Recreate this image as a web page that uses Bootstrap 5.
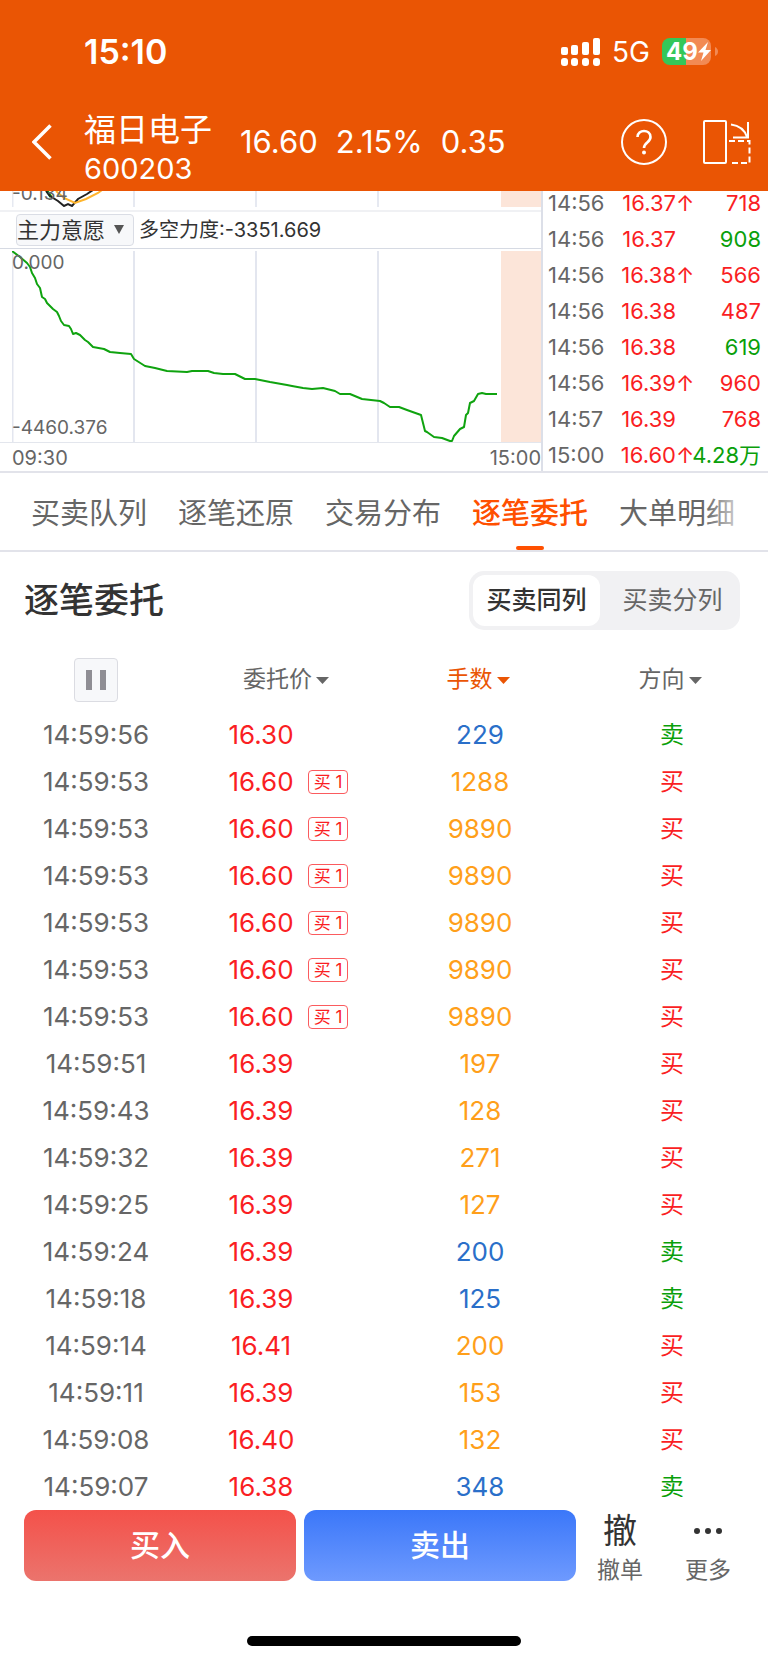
<!DOCTYPE html>
<html lang="zh-CN">
<head>
<meta charset="utf-8">
<meta name="viewport" content="width=device-width, initial-scale=1">
<title>福日电子 600203</title>
<link href="https://cdn.jsdelivr.net/npm/bootstrap@5.3.0/dist/css/bootstrap.min.css" rel="stylesheet">
<style>
  :root { --brand: #ea5504; --accent: #ff5000; --rise: #fa1e23; --fall: #0aa00a; --ink: #333; --dim: #666; --rule: #e2e3ea; }
  body { font-family: Inter, "Noto Sans CJK SC", sans-serif; color: var(--dim); background: #fff; height: 100vh; overflow: hidden; }
  svg { display: block; flex: none; }
  a { color: inherit; text-decoration: none; }
  .rise { color: var(--rise); }
  .fall { color: var(--fall); }
  .big { color: #ff9f1a; }
  .mid { color: #2a6fc9; }

  .app-head { background: var(--brand); color: #fff; }
  .status-row { height: 103px; padding: 0 50px 0 84px; }
  .clock { font-size: 34px; font-weight: 600; }
  .carrier { font-size: 28px; margin: 0 12px; }
  .battery { width: 49px; height: 27px; border-radius: 8px; background: linear-gradient(90deg, #34c759 50%, #f28a54 50%); padding-left: 4px; font-size: 24px; font-weight: 700; line-height: 27px; }
  .quote-row { height: 88px; padding: 0 17px 10px 32px; }
  .stock { margin-top: 14px; line-height: 39px; }
  .stock-name { font-size: 32px; }
  .stock-code { font-size: 29px; }
  .quote { font-size: 31px; gap: 18px; margin-left: 28px; }

  .market { border-bottom: 2px solid var(--rule); }
  .plot-side { min-width: 0; padding-left: 12px; border-right: 2px solid #dcdfe8; }
  .plot { position: relative; }
  .plot svg { width: 100%; height: 100%; }
  .plot-top { height: 16px; overflow: hidden; }
  .plot-main { height: 191px; }
  .plot-label { position: absolute; left: 0; font-size: 19px; line-height: 24px; }
  .indicator-row { margin: 3px 0 2px -12px; padding-left: 16px; height: 39px; border-top: 2px solid #f0f1f4; border-bottom: 1px solid #d6dae3; color: var(--ink); font-size: 20px; }
  .picker { position: relative; margin-right: 5px; }
  .picker select { appearance: none; width: 118px; height: 32px; padding: 0; border: 1px solid #dadde5; border-radius: 4px; background: #f7f8fa; color: var(--ink); font-size: 22px; line-height: 30px; }
  .picker svg { position: absolute; right: 10px; top: 11px; pointer-events: none; }
  .time-axis { margin-left: -12px; padding-left: 12px; height: 29px; border-top: 1px solid #e3e6ed; font-size: 20px; line-height: 30px; }
  .ticks-side { width: 225px; height: 280px; overflow: hidden; padding: 0 7px 0 5px; }
  .ticks { width: 100%; margin-top: -6px; table-layout: fixed; font-size: 22px; line-height: 36px; white-space: nowrap; }
  .ticks td { padding: 0; }

  .tab-row { height: 79px; border-bottom: 2px solid var(--rule); padding-left: 31px; gap: 31px; font-size: 29px; white-space: nowrap; overflow: hidden; position: relative; }
  .tab-row::after { content: ""; position: absolute; right: 0; top: 0; width: 64px; height: 76px; background: linear-gradient(90deg, #fff0, #fff 76%); }
  .tab-row a { position: relative; padding-top: 5px; line-height: 72px; }
  .tab-row a.active { color: var(--accent); font-weight: 500; }
  .tab-row a.active::after { content: ""; position: absolute; left: 50%; bottom: 0; width: 28px; margin-left: -14px; height: 4px; border-radius: 2px; background: var(--accent); }
  .title-row { padding: 19px 28px 18px 24px; }
  .title-row h1 { font-size: 35px; line-height: 59px; font-weight: 500; color: var(--ink); }
  .switch { padding: 4px; gap: 9px; border-radius: 15px; background: #f1f1f3; }
  .switch button { width: 127px; height: 51px; padding: 0; border: 0; border-radius: 12px; background: none; color: var(--dim); font-size: 25px; }
  .switch .active { background: #fff; color: var(--ink); font-weight: 500; }

  .orders { width: 100%; table-layout: fixed; text-align: center; font-size: 26px; line-height: 47px; }
  .orders td, .orders th { padding: 0; }
  .orders th { height: 63px; font-size: 23px; font-weight: 400; vertical-align: middle; }
  .sorter { padding: 0 4px 0 0; border: 0; background: none; color: inherit; line-height: 30px; }
  .orders td:last-child { font-size: 24px; }
  .pause { display: block; width: 44px; height: 44px; margin: 0 auto; padding: 0; border: 1px solid #dbdce2; border-radius: 4px; background: #f7f8fa; }
  .price { width: 66px; }
  .level { width: 40px; height: 24px; margin-left: 14px; }
  .level-on { border: 1px solid #fb5b5e; border-radius: 4px; font-size: 17px; line-height: 22px; }
  .sorted { color: var(--brand); }

  .foot { padding: 13px 16px 17px 24px; }
  .trade { height: 71px; border: 0; border-radius: 12px; color: #fff; font-size: 30px; font-weight: 500; flex: 1 1 0; }
  .trade:hover { color: #fff; }
  .buy { background: linear-gradient(#f4514a, #eb746d); margin-right: 8px; }
  .sell { background: linear-gradient(#3b77f9, #6e9afe); }
  .tool { width: 88px; height: 71px; padding: 0; border: 0; background: none; color: var(--dim); font-size: 23px; line-height: 24px; }
  .tool-mark { height: 48px; font-size: 34px; line-height: 42px; color: var(--ink); }
  .home-bar { width: 274px; height: 10px; border-radius: 5px; background: #000; margin: 55px 0 0 -8px; }
</style>
</head>
<body class="d-flex flex-column">

<header class="app-head flex-shrink-0">
  <div class="status-row d-flex align-items-center">
    <span class="clock me-auto">15:10</span>
    <svg width="39" height="28" viewBox="0 0 39 28" fill="#fff" aria-hidden="true">
      <rect x="0" y="9" width="7" height="8" rx="2"/><rect x="10" y="7" width="7" height="10" rx="2"/><rect x="21" y="4" width="7" height="13" rx="2"/><rect x="32" y="0" width="7" height="17" rx="2"/>
      <rect x="0" y="20" width="7" height="8" rx="3"/><rect x="10" y="20" width="7" height="8" rx="3"/><rect x="21" y="20" width="7" height="8" rx="3"/><rect x="32" y="20" width="7" height="8" rx="3"/>
    </svg>
    <span class="carrier">5G</span>
    <span class="battery d-flex align-items-center">49<svg width="13" height="19" viewBox="0 0 13 19" fill="#fff" aria-hidden="true"><path d="M10 0 0 10.500h5.500L3 19 13 8H7.500z"/></svg></span>
    <svg class="ms-1" width="3" height="9" viewBox="0 0 3 9" aria-hidden="true"><path d="M0 0q3 1.500 3 4.500T0 9z" fill="#f28a54"/></svg>
  </div>
  <div class="quote-row d-flex align-items-center">
    <a href="#" aria-label="返回"><svg width="20" height="36" viewBox="0 0 20 36" fill="none" stroke="#fff" stroke-width="3.500"><path d="M18.500 1.500 2 18l16.500 16.500"/></svg></a>
    <div class="stock ms-4 ps-2">
      <div class="stock-name">福日电子</div>
      <div class="stock-code">600203</div>
    </div>
    <div class="quote d-flex me-auto"><span>16.60</span><span>2.15%</span><span>0.35</span></div>
    <a href="#" aria-label="帮助"><svg width="46" height="46" viewBox="0 0 46 46" fill="none" stroke="#fff" stroke-width="2"><circle cx="23" cy="23" r="22"/><path stroke-width="2.600" d="M16.500 18c0-8 13-8 13 0 0 5.500-6.500 5.500-6.500 11"/><circle cx="23" cy="33.500" r="2" fill="#fff" stroke="none"/></svg></a>
    <a href="#" class="ms-4 ps-2" aria-label="横屏"><svg class="ms-1" width="48" height="44" viewBox="0 0 48 44" fill="none" stroke="#fff" stroke-width="2"><rect x="1" y="1" width="22" height="42" rx="1"/><path d="M28 4.500c8 1 13.500 5 16 12.500M45 2v15.500H30"/><path stroke-dasharray="6 3" d="M26 21h20.500v22H26"/></svg></a>
  </div>
</header>

<main class="flex-grow-1 overflow-hidden">
  <section class="market d-flex">
    <div class="plot-side flex-grow-1">
      <div class="plot plot-top">
        <svg viewBox="0 0 529 16" preserveAspectRatio="none" fill="none" stroke-width="2" aria-hidden="true">
          <rect x="489" width="40" height="16" fill="#fce5d9"/>
          <path stroke="#e6e9f1" d="M.5 0v16M122 0v16M244 0v16M366 0v16"/>
          <path stroke="#0aa00a" stroke-width="3" d="M35 0l4 6"/>
          <path stroke="#222" d="M34 0l4 5 8 5 6 5 4-2 4 2 6-7 9-5 6-4"/>
          <path stroke="#ffb52e" d="M44 0l8 7 11 5 11-4 12-6 4-3"/>
        </svg>
        <span class="plot-label" style="top:-9px">-0.134</span>
      </div>
      <div class="indicator-row d-flex align-items-center">
        <div class="picker">
          <select aria-label="指标"><option>主力意愿</option></select>
          <svg width="10" height="9" viewBox="0 0 10 9" aria-hidden="true"><path d="M0 0h10L5 9z" fill="#555"/></svg>
        </div>
        <span>多空力度:-3351.669</span>
      </div>
      <div class="plot plot-main">
        <svg viewBox="0 0 529 191" preserveAspectRatio="none" fill="none" stroke-width="2" aria-hidden="true">
          <rect x="489" width="40" height="191" fill="#fce5d9"/>
          <path stroke="#e3e6ef" d="M.5 0v191M122 0v191M244 0v191M366 0v191"/>
          <path stroke="#0fa30f" stroke-linejoin="round" d="M0 0L8 6 15 12 18 16 20 22 23 27 25 33 28 37 30 46 33 48 35 52 41 58 45 61 47 65 49 70 52 74 57 75 59 78 61 83 64 82 68 84 73 89 76 91 81 96 92 98 98 101 108 102 119 103 122 108 133 115 143 117 155 120 175 121 180 120 196 120 202 122 211 123 223 123 233 128 243 128 258 131 275 134 280 135 291 137 300 138 311 137 323 140 328 143 338 143 350 148 368 150 372 152 378 156 387 156 395 159 409 164 413 180 415 181 422 186 430 187 438 190 440 190 442 185 448 178 452 176 454 164 456 162 458 152 462 150 466 143 470 142 474 143 485 143"/>
        </svg>
        <span class="plot-label" style="top:0">0.000</span>
        <span class="plot-label" style="bottom:2px">-4460.376</span>
      </div>
      <div class="time-axis d-flex justify-content-between"><span>09:30</span><span>15:00</span></div>
    </div>
    <div class="ticks-side flex-shrink-0">
      <table class="ticks">
        <colgroup><col style="width:60px"><col style="width:68px"><col style="width:15px"><col></colgroup>
        <tbody id="ticks"></tbody>
      </table>
    </div>
  </section>

  <nav class="tab-row d-flex">
    <a href="#">买卖队列</a><a href="#">逐笔还原</a><a href="#">交易分布</a><a href="#" class="active" aria-current="page">逐笔委托</a><a href="#">大单明细</a>
  </nav>

  <div class="title-row d-flex justify-content-between align-items-center">
    <h1 class="m-0">逐笔委托</h1>
    <div class="switch d-flex">
      <button type="button" class="active">买卖同列</button><button type="button">买卖分列</button>
    </div>
  </div>

  <table class="orders">
    <thead>
      <tr>
        <th><button type="button" class="pause" aria-label="暂停"><svg class="mx-auto" width="20" height="20" viewBox="0 0 20 20" fill="#8f8e94"><path d="M0 0h6v20H0zM14 0h6v20h-6z"/></svg></button></th>
        <th><button type="button" class="sorter">委托价<svg class="d-inline-block align-middle ms-1" width="13" height="7" viewBox="0 0 13 7" fill="currentColor"><path d="M0 0h13L6.500 7z"/></svg></button></th>
        <th class="sorted"><button type="button" class="sorter">手数<svg class="d-inline-block align-middle ms-1" width="13" height="7" viewBox="0 0 13 7" fill="currentColor"><path d="M0 0h13L6.500 7z"/></svg></button></th>
        <th><button type="button" class="sorter">方向<svg class="d-inline-block align-middle ms-1" width="13" height="7" viewBox="0 0 13 7" fill="currentColor"><path d="M0 0h13L6.500 7z"/></svg></button></th>
      </tr>
    </thead>
    <tbody id="orders"></tbody>
  </table>
</main>

<footer class="foot flex-shrink-0">
  <div class="d-flex">
    <button type="button" class="btn trade buy">买入</button>
    <button type="button" class="btn trade sell">卖出</button>
    <button type="button" class="tool"><span class="tool-mark d-block">撤</span>撤单</button>
    <button type="button" class="tool"><span class="tool-mark d-flex justify-content-center"><svg width="28" height="42" viewBox="0 0 28 42" fill="#333" aria-hidden="true"><circle cx="3" cy="21" r="3"/><circle cx="14" cy="21" r="3"/><circle cx="25" cy="21" r="3"/></svg></span>更多</button>
  </div>
  <div class="d-flex justify-content-center"><div class="home-bar"></div></div>
</footer>

<script src="https://cdn.jsdelivr.net/npm/bootstrap@5.3.0/dist/js/bootstrap.bundle.min.js"></script>
<script>
  // time, price, up arrow, volume, volume colour
  const ticks = [
    ['14:56', '16.37', '↑', '718', 'rise'], ['14:56', '16.37', '', '908', 'fall'],
    ['14:56', '16.38', '↑', '566', 'rise'], ['14:56', '16.38', '', '487', 'rise'],
    ['14:56', '16.38', '', '619', 'fall'], ['14:56', '16.39', '↑', '960', 'rise'],
    ['14:57', '16.39', '', '768', 'rise'], ['15:00', '16.60', '↑', '4.28万', 'fall']
  ];
  document.getElementById('ticks').innerHTML = ticks.map(([t, p, a, v, c]) =>
    `<tr><td>${t}</td><td class="rise text-end">${p}</td><td class="rise">${a}</td><td class="${c} text-end">${v}</td></tr>`).join('');

  // seconds, price, lots, side, queue level
  const orders = [
    ['56', '16.30', 229, '卖'], ['53', '16.60', 1288, '买', 1], ['53', '16.60', 9890, '买', 1],
    ['53', '16.60', 9890, '买', 1], ['53', '16.60', 9890, '买', 1], ['53', '16.60', 9890, '买', 1],
    ['53', '16.60', 9890, '买', 1], ['51', '16.39', 197, '买'], ['43', '16.39', 128, '买'],
    ['32', '16.39', 271, '买'], ['25', '16.39', 127, '买'], ['24', '16.39', 200, '卖'],
    ['18', '16.39', 125, '卖'], ['14', '16.41', 200, '买'], ['11', '16.39', 153, '买'],
    ['08', '16.40', 132, '买'], ['07', '16.38', 348, '卖']
  ];
  document.getElementById('orders').innerHTML = orders.map(([s, p, n, d, l]) =>
    `<tr><td>14:59:${s}</td>
     <td><div class="d-flex justify-content-center align-items-center rise"><span class="price">${p}</span><span class="level${l ? ' level-on' : ''}">${l ? '买 ' + l : ''}</span></div></td>
     <td class="${d === '买' ? 'big' : 'mid'}">${n}</td>
     <td class="${d === '买' ? 'rise' : 'fall'}">${d}</td></tr>`).join('');
</script>
</body>
</html>
